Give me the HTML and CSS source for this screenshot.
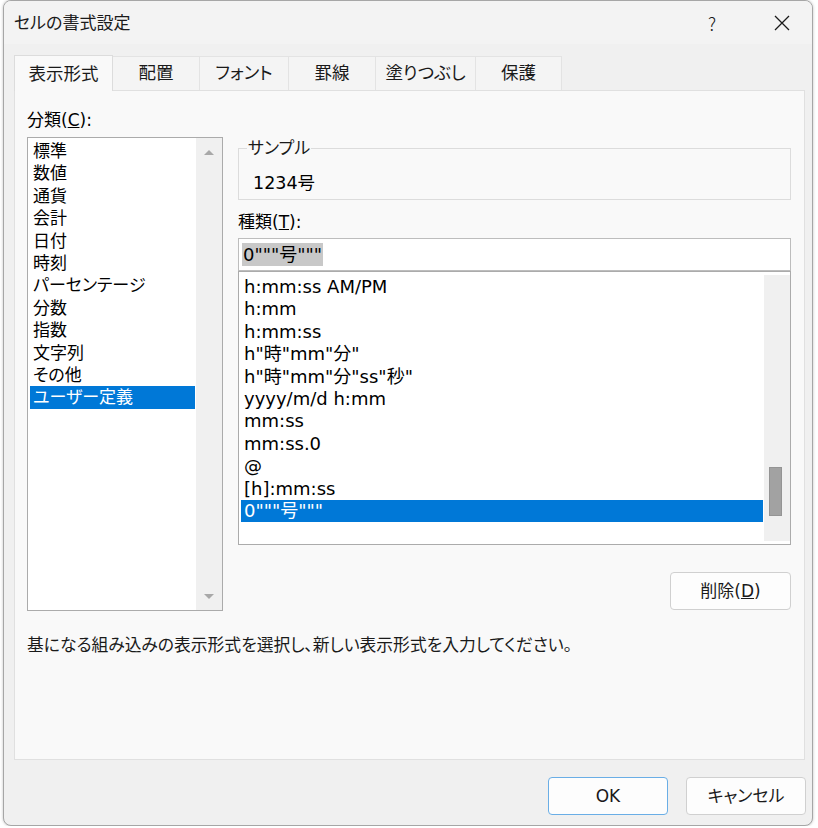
FILE: index.html
```html
<!DOCTYPE html>
<html lang="ja">
<head>
<meta charset="utf-8">
<title>セルの書式設定</title>
<link rel="stylesheet" href="styles.css">
</head>
<body>
<div class="window">
  <div class="titlebar">
    <span class="title">セルの書式設定</span>
    <span class="help">?</span>
    <svg class="close" width="16" height="16" viewBox="0 0 16 16" aria-hidden="true">
      <path d="M1 1 L15 15 M15 1 L1 15" stroke="#1a1a1a" stroke-width="1.3" fill="none"/>
    </svg>
  </div>
  <div class="content">
    <div class="tabs">
      <div class="tab active t1">表示形式</div>
      <div class="tab t2">配置</div>
      <div class="tab t3">フォント</div>
      <div class="tab t4">罫線</div>
      <div class="tab t5">塗りつぶし</div>
      <div class="tab t6">保護</div>
    </div>
    <div class="panel">
      <div class="columns">
        <div class="left">
          <div class="label">分類(<u>C</u>):</div>
          <div class="listbox cat">
            <ul class="items">
              <li>標準</li>
              <li>数値</li>
              <li>通貨</li>
              <li>会計</li>
              <li>日付</li>
              <li>時刻</li>
              <li>パーセンテージ</li>
              <li>分数</li>
              <li>指数</li>
              <li>文字列</li>
              <li>その他</li>
              <li class="selected">ユーザー定義</li>
            </ul>
            <div class="vscroll arrows"><span class="arrow up"></span><span class="arrow down"></span></div>
          </div>
        </div>
        <div class="right">
          <fieldset class="sample">
            <legend>サンプル</legend>
            <div class="sample-value">1234号</div>
          </fieldset>
          <div class="label type-label">種類(<u>T</u>):</div>
          <div class="textbox"><span class="sel">0"""号"""</span></div>
          <div class="listbox fmt">
            <ul class="items">
              <li>h:mm:ss AM/PM</li>
              <li>h:mm</li>
              <li>h:mm:ss</li>
              <li>h"時"mm"分"</li>
              <li>h"時"mm"分"ss"秒"</li>
              <li>yyyy/m/d h:mm</li>
              <li>mm:ss</li>
              <li>mm:ss.0</li>
              <li>@</li>
              <li>[h]:mm:ss</li>
              <li class="selected">0"""号"""</li>
            </ul>
            <div class="vscroll track"><span class="thumb"></span></div>
          </div>
          <div class="btn-row"><button class="btn delete">削除(<u>D</u>)</button></div>
        </div>
      </div>
      <p class="desc">基になる組み込みの表示形式を選択し、新しい表示形式を入力してください。</p>
    </div>
    <div class="footer">
      <button class="btn ok">OK</button>
      <button class="btn">キャンセル</button>
    </div>
  </div>
</div>
</body>
</html>
```
FILE: styles.css
```css
* { box-sizing: border-box; }

html, body {
  margin: 0;
  padding: 0;
  background: #ffffff;
}

body {
  font-family: "DejaVu Sans", "Noto Sans CJK JP", sans-serif;
  font-size: 17px;
  line-height: 22px;
  color: #000;
  font-feature-settings: "palt";
}

.window {
  margin: 0 0 0 3px;
  width: 810px;
  height: 826px;
  border: 1px solid #a6a6a6;
  border-radius: 8px;
  background: #f0f0f0;
  overflow: hidden;
  box-shadow: 0 0 3px rgba(0, 0, 0, 0.25);
  display: flex;
  flex-direction: column;
}

/* title bar */
.titlebar {
  height: 43px;
  flex: none;
  display: flex;
  align-items: center;
  padding-left: 10px;
  background: #f3f3f3;
}
.title {
  flex: 1;
  color: #1a1a1a;
}
.help {
  width: 20px;
  text-align: center;
  color: #1a1a1a;
  font-family: "Noto Sans CJK JP", sans-serif;
  font-weight: 300;
  font-size: 18px;
}
.close {
  margin-left: 52px;
  margin-right: 22px;
  display: block;
}

/* content */
.content {
  flex: 1;
  display: flex;
  flex-direction: column;
  padding-top: 12px;
}

.tabs {
  display: flex;
  height: 34px;
  margin-left: 10px;
  position: relative;
  z-index: 1;
}
.tab {
  height: 34px;
  line-height: 32px;
  text-align: center;
  background: #f4f4f4;
  border: 1px solid #e3e3e3;
  border-bottom: none;
  border-left: none;
  color: #1a1a1a;
  font-size: 17.5px;
}
.tab.active {
  height: 36px;
  margin-top: -1px;
  line-height: 36px;
  background: #f9f9f9;
  border: 1px solid #dcdcdc;
  border-bottom: none;
}
.t1 { width: 99px; }
.t2 { width: 87px; }
.t3 { width: 89px; }
.t4 { width: 87px; }
.t5 { width: 100px; }
.t6 { width: 86px; }

.panel {
  margin-left: 10px;
  width: 791px;
  height: 670px;
  flex: none;
  background: #f9f9f9;
  border: 1px solid #e0e0e0;
  padding: 18px 0 0 12px;
}

.columns {
  display: flex;
  align-items: flex-start;
  gap: 15px;
}

.left {
  width: 196px;
}
.label {
  height: 22px;
}
.left .label {
  margin-bottom: 6px;
}

.listbox {
  display: flex;
  background: #fff;
  border: 1px solid #ababab;
}
.items {
  list-style: none;
  margin: 0;
  flex: 1;
}
.items li {
  height: 22.4px;
  line-height: 22.4px;
  padding-left: 3px;
  white-space: nowrap;
}
.items li.selected {
  background: #0078d7;
  color: #fff;
}

.cat {
  height: 474px;
}
.cat .items {
  padding: 2px 1px 0 2px;
}
.vscroll {
  width: 26px;
  flex: none;
  background: #f0f0f0;
}
.arrows {
  display: flex;
  flex-direction: column;
  justify-content: space-between;
  align-items: center;
  padding: 12px 0 11px;
}
.arrow {
  width: 0;
  height: 0;
  border-left: 5px solid transparent;
  border-right: 5px solid transparent;
}
.arrow.up { border-bottom: 5px solid #a8a8a8; }
.arrow.down { border-top: 5px solid #a8a8a8; }

.right {
  width: 553px;
  margin-top: 28px;
  display: flex;
  flex-direction: column;
}

.sample {
  margin: 0;
  padding: 0 0 5px 8px;
  border: 1px solid #dcdcdc;
  min-width: 0;
}
.sample legend {
  padding: 0 1px;
  line-height: 22px;
  color: #1a1a1a;
}
.sample-value {
  margin: 13px 0 0 6px;
  height: 22px;
  font-size: 17.5px;
}

.type-label {
  margin-top: 11px;
}

.textbox {
  margin-top: 5px;
  height: 33px;
  background: #fff;
  border: 1px solid #bdbdbd;
  padding: 4px 0 0 3px;
  font-size: 18px;
}
.sel {
  display: inline-block;
  height: 23px;
  line-height: 23px;
  padding: 0 1px;
  background: #c8c8c8;
}

.fmt {
  height: 274px;
  font-size: 18px;
}
.fmt .items {
  padding: 4px 1px 0 2px;
}
.track {
  margin: 3px 0;
  display: flex;
  flex-direction: column;
}
.thumb {
  display: block;
  width: 13px;
  height: 49px;
  margin: 192px 0 0 5px;
  background: #a2a2a2;
  border: 1px solid #949494;
}

.btn-row {
  display: flex;
  justify-content: flex-end;
  margin-top: 27px;
}
.btn {
  font: inherit;
  font-feature-settings: "palt";
  width: 121px;
  height: 38px;
  padding: 0;
  background: #fdfdfd;
  border: 1px solid #d0d0d0;
  border-radius: 4px;
  color: #1a1a1a;
  line-height: 36px;
}

.desc {
  margin: 23px 0 0;
  line-height: 22px;
  color: #1a1a1a;
  font-size: 16.8px;
}

.footer {
  flex: 1;
  display: flex;
  justify-content: flex-end;
  gap: 18px;
  padding: 17px 6px 0 0;
}
.footer .btn {
  width: 120px;
}
.btn.ok {
  border-color: #6aaee6;
}
```
